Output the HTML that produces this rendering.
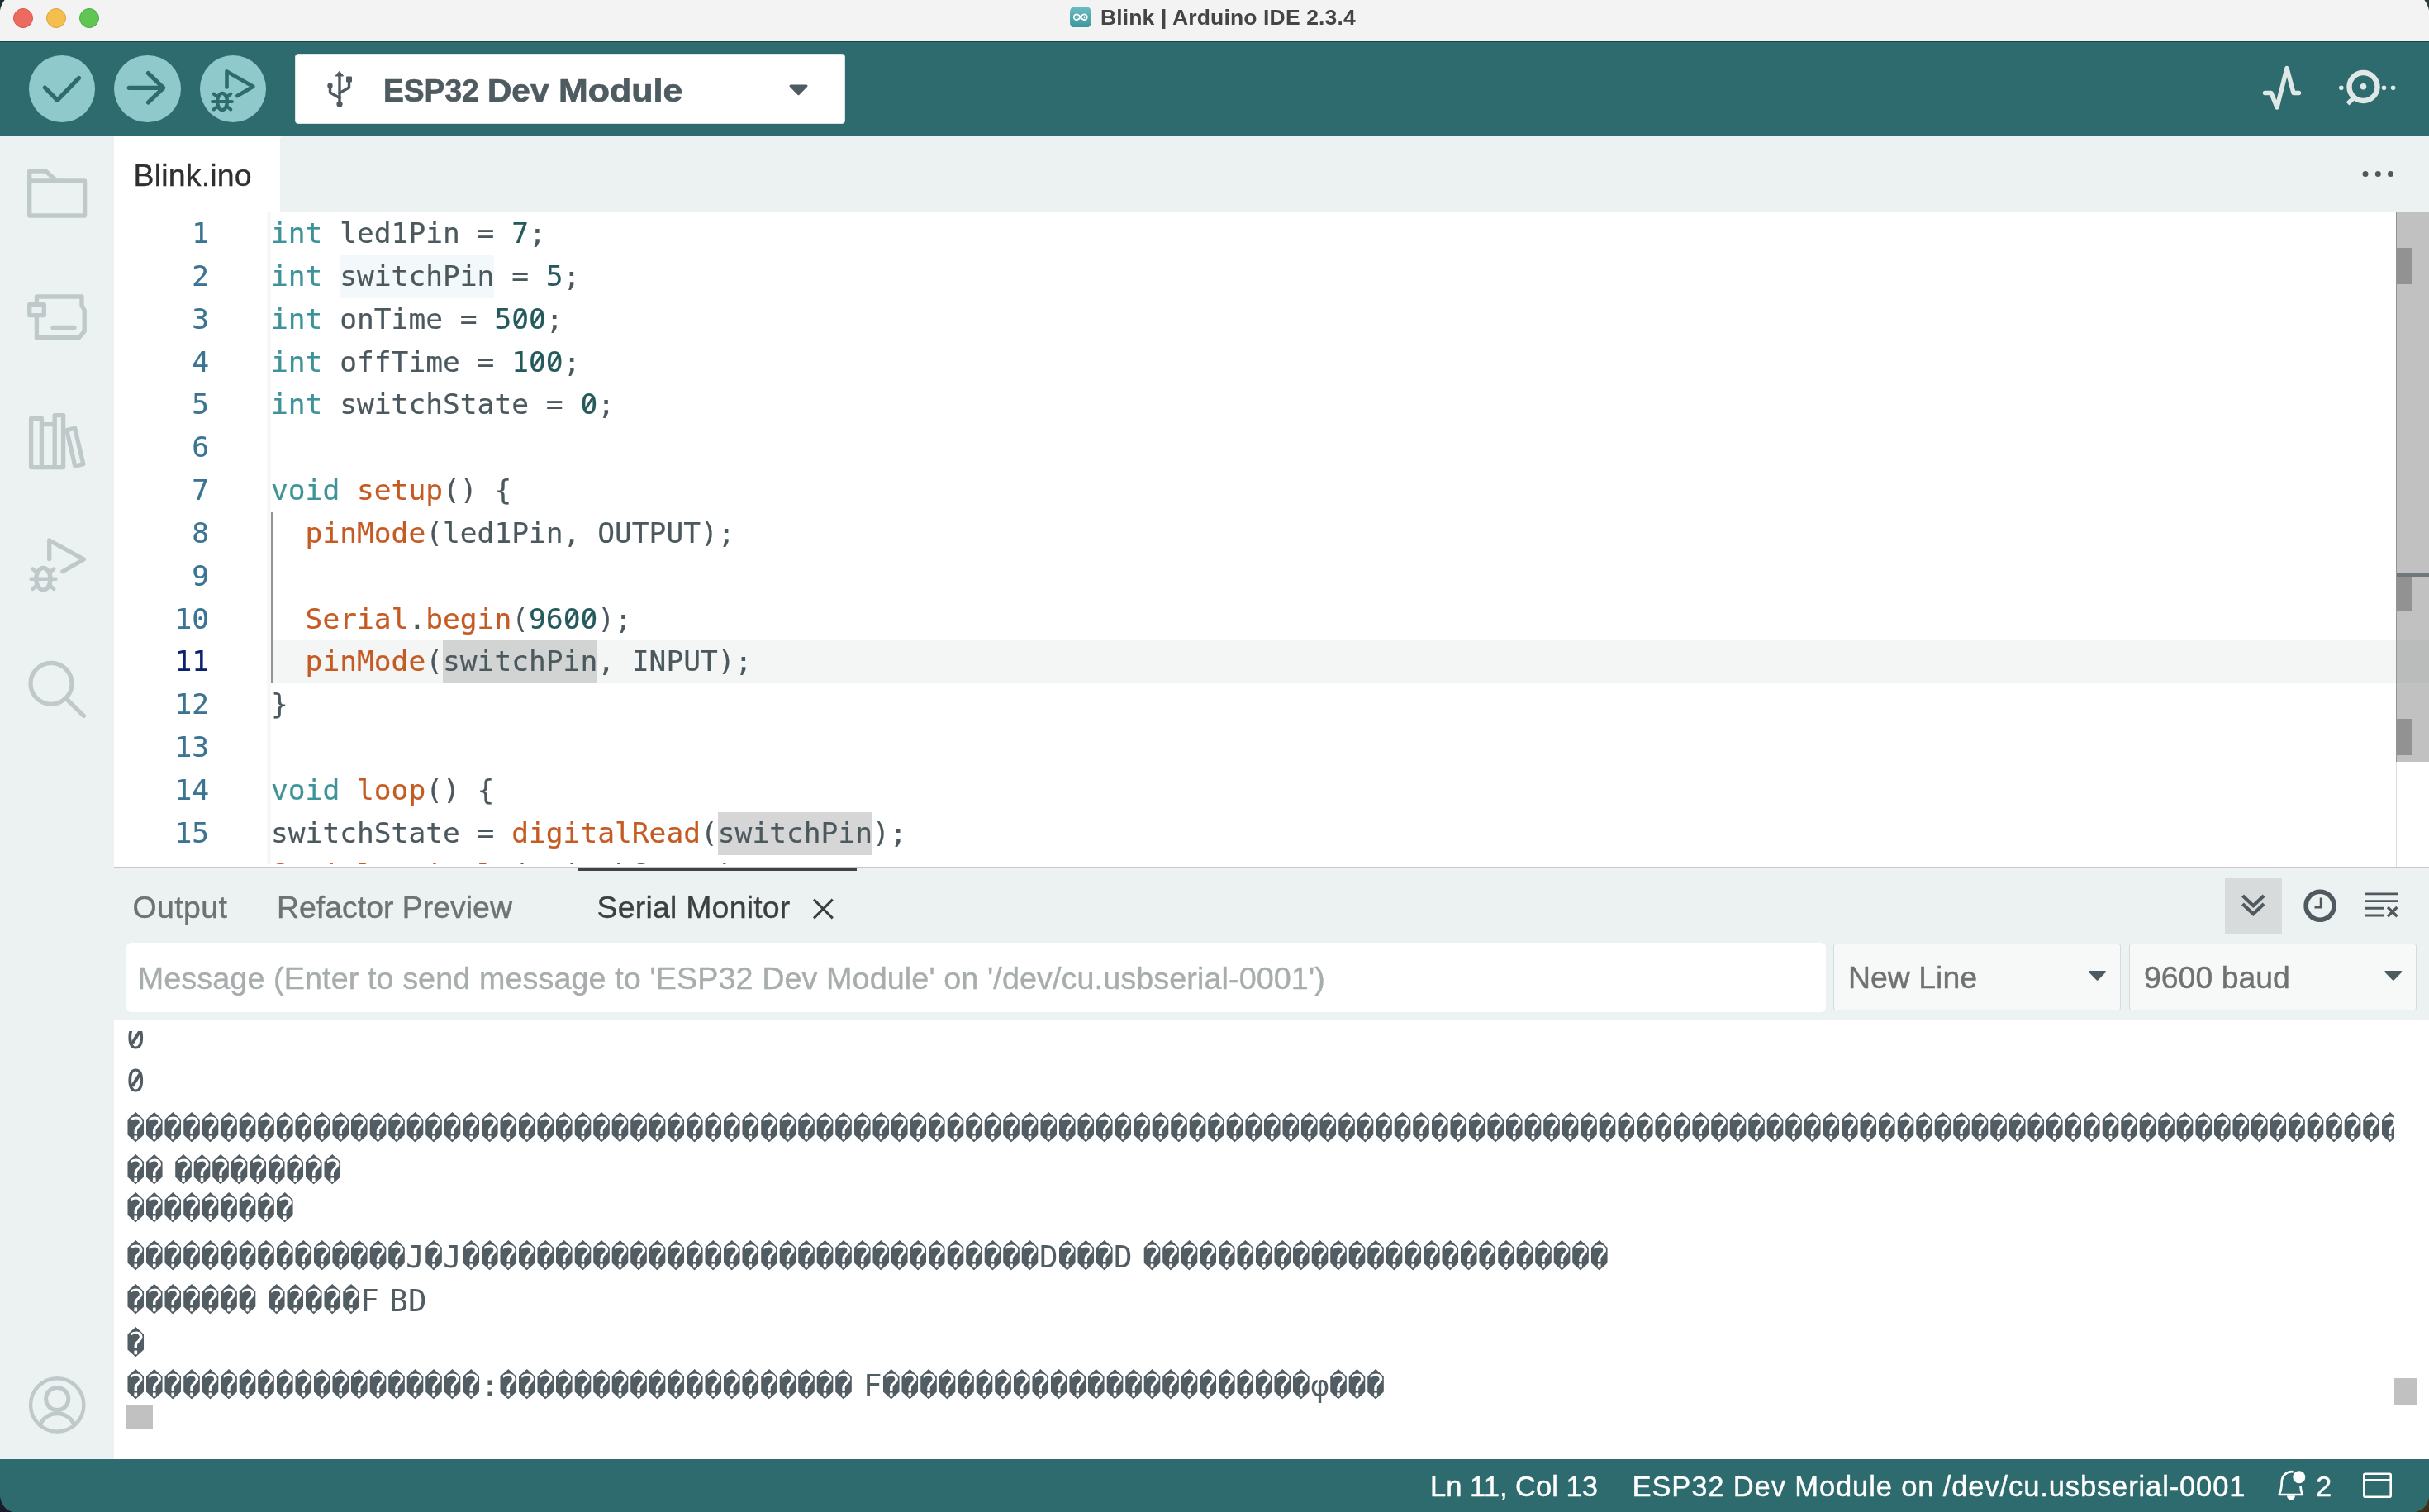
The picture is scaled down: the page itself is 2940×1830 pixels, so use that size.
<!DOCTYPE html>
<html lang="en">
<head>
<meta charset="utf-8">
<title>Blink | Arduino IDE 2.3.4</title>
<style>
*{box-sizing:border-box;margin:0;padding:0}
html,body{width:2940px;height:1830px;overflow:hidden;background:#1c1b2a}
body{font-family:"Liberation Sans",sans-serif;position:relative}
#win{position:absolute;left:0;top:0;width:2940px;height:1830px;background:#fff;overflow:hidden;will-change:transform}
.abs{position:absolute}
/* title bar */
#titlebar{left:0;top:0;width:2940px;height:50px;background:#f3f3f3}
.tl{position:absolute;top:10px;width:24px;height:24px;border-radius:50%}
#title{left:1332px;top:4.4px;height:34px;line-height:34px;font-size:26.5px;font-weight:bold;color:#444;white-space:nowrap;letter-spacing:.14px}
/* toolbar */
#toolbar{left:0;top:50px;width:2940px;height:115px;background:#2d6b6e;border-top:1.4px solid #13484d}
.tbtn{position:absolute;top:67px;width:80.4px;height:81px;border-radius:50%;background:#90c9cb}
#board{left:357px;top:65px;width:666px;height:85px;background:#fff;border-radius:4px;border:1.5px solid #dbe4e4}
.bn{position:absolute;top:86.5px;height:46px;line-height:46px;font-size:39.2px;font-weight:bold;color:#4e5b61;white-space:pre;transform-origin:0 0;-webkit-text-stroke:.7px #4e5b61}
/* sidebar */
#sidebar{left:0;top:165px;width:138px;height:1601px;background:#ecf1f1}
/* tabs */
#tabbar{left:339px;top:165px;width:2601px;height:92px;background:#ecf1f1;border-radius:3px 0 0 4px}
#tab1{left:138px;top:165px;width:201px;height:92px;background:#fff}
#tab1t{left:161.6px;top:188.9px;letter-spacing:.2px;height:46px;line-height:46px;font-size:37.44px;color:#2f2f2f;white-space:nowrap}
/* editor */
#editor{left:138px;top:257px;width:2802px;height:792px;background:#fff;overflow:hidden}
.mono{font-family:"DejaVu Sans Mono","Liberation Mono",monospace}
.cl{position:absolute;left:190px;height:51.84px;line-height:51.84px;font-size:34.56px;color:#4b585e;white-space:pre}
.ln{position:absolute;left:0;width:115px;text-align:right;height:51.84px;line-height:51.84px;font-size:34.56px;color:#3b7392;white-space:pre}
.k{color:#3e9398}.f{color:#c55a22}.n{color:#255a5d}
.z{position:relative}
.z::before{content:"";position:absolute;left:50%;top:50%;width:.22em;height:.22em;margin:-.128em 0 0 -.11em;background:#fff;border-radius:50%}
.z::after{content:"";position:absolute;left:50%;top:50%;width:.095em;height:.47em;margin:-.253em 0 0 -.0475em;background:currentColor;transform:rotate(32.6deg)}
/* bottom panel */
#panelhead{left:138px;top:1049px;width:2802px;height:185px;background:#ecf1f1}
.ptab{position:absolute;top:1074.8px;height:46px;line-height:46px;font-size:37.44px;color:#6e7272;white-space:nowrap}
#msg{left:153px;top:1141px;width:2057px;height:83.8px;background:#fff;border-radius:6px}
#msgt{left:166.8px;top:1160.8px;height:46px;line-height:46px;font-size:37.7px;letter-spacing:.11px;color:#a7adad;white-space:nowrap}
.sel{position:absolute;top:1141.5px;height:81px;background:#f7f9f9;border:1.5px solid #d4dddd;border-radius:3px}
.selt{position:absolute;top:1160px;height:46px;line-height:46px;font-size:37.44px;color:#6e7272;white-space:nowrap}
#out{left:138px;top:1248px;width:2760px;height:518px;overflow:hidden;background:#fff}
.nsp{display:inline-block;width:12.6px}
.ol{position:absolute;left:15px;font-size:37.46px;height:52px;line-height:52px;color:#515c63;white-space:pre}
.ptab,.selt,#msgt,#tab1t,.st{-webkit-text-stroke:.4px}
.cl,.ln{-webkit-text-stroke:.2px}
/* status */
#status{left:0;top:1766px;width:2940px;height:64px;background:#2d6b6e}
.st{position:absolute;top:1775.7px;height:46px;line-height:46px;font-size:34.56px;color:#fff;white-space:nowrap}
</style>
</head>
<body>
<div id="win">
<div id="titlebar" class="abs"></div>
<div class="tl" style="left:16px;background:#ed6a5e;border:1px solid #d5584d"></div>
<div class="tl" style="left:56px;background:#f5bf4f;border:1px solid #d9a33b"></div>
<div class="tl" style="left:96px;background:#61c554;border:1px solid #4ea943"></div>
<svg class="abs" style="left:1295px;top:7.6px" width="25.6" height="25.6" viewBox="0 0 26 26">
<defs><linearGradient id="ig" x1="0" y1="0" x2="0" y2="1"><stop offset="0" stop-color="#6dbcc0"/><stop offset="1" stop-color="#3a979c"/></linearGradient></defs>
<rect x="0" y="0" width="26" height="26" rx="6" fill="url(#ig)"/>
<path d="M13 13 C11.5 10.6 10 9.6 8.2 9.6 A3.4 3.4 0 1 0 8.2 16.4 C10 16.4 11.5 15.4 13 13 C14.5 10.6 16 9.6 17.8 9.6 A3.4 3.4 0 1 1 17.8 16.4 C16 16.4 14.5 15.4 13 13 Z" fill="none" stroke="#fff" stroke-width="1.7"/>
<path d="M6.8 13 H9.6 M16.4 13 H19.2 M17.8 11.6 V14.4" stroke="#fff" stroke-width="1" fill="none"/>
</svg>
<div id="title" class="abs">Blink | Arduino IDE 2.3.4</div>
<div id="toolbar" class="abs"></div>
<div class="tbtn" style="left:34.8px"></div>
<div class="tbtn" style="left:138.2px"></div>
<div class="tbtn" style="left:241.8px"></div>
<svg class="abs" style="left:0;top:50px" width="340" height="115" viewBox="0 50 340 115" fill="none" stroke="#2d6b6e" stroke-linecap="round" stroke-linejoin="round">
<path d="M54.3 106 L69.5 121.3 L95.6 94.4" stroke-width="5.2"/>
<path d="M156.2 106.3 H197.5 M179.4 88.6 L197.8 106.3 L179.4 124" stroke-width="5.2"/>
<path d="M274.5 105.5 V86.4 L306.4 104.7 L287.3 116" stroke-width="4.6"/>
<ellipse cx="269" cy="123" rx="5.9" ry="10.1" stroke-width="4.4"/>
<path d="M257.2 123 H280.8 M258.8 113.6 L262.6 116.8 M279.2 113.6 L275.4 116.8 M258.8 132.4 L262.6 129.4 M279.2 132.4 L275.4 129.4" stroke-width="4.2"/>
</svg>
<div id="board" class="abs"></div>
<svg class="abs" style="left:390px;top:82px" width="44" height="52" viewBox="390 82 44 52" fill="none" stroke="#4e5b61" stroke-width="3.4" stroke-linecap="round" stroke-linejoin="round">
<path d="M411 126 V90"/>
<path d="M411 86.6 L415.6 92 H406.4 Z" fill="#4e5b61" stroke-width="1"/>
<path d="M411 118.5 L399.5 112 V104.5"/>
<path d="M411 112.5 L422.5 106 V98.5"/>
<circle cx="399.5" cy="103.8" r="3.2" fill="#4e5b61" stroke="none"/>
<rect x="419" y="92.5" width="7" height="7" rx="1" fill="#4e5b61" stroke="none"/>
<circle cx="411" cy="126" r="3.6" fill="#4e5b61" stroke="none"/>
</svg>
<div class="bn" style="left:463.7px;transform:scaleX(.949)">ESP32 </div><div class="bn" style="left:590.3px;transform:scaleX(1.037)">Dev </div><div class="bn" style="left:675.9px;transform:scaleX(1.097)">Module</div>
<svg class="abs" style="left:950px;top:98px" width="34" height="22" viewBox="950 98 34 22"><path d="M957 104 H976 L966.5 113.6 Z" fill="#4e5b61" stroke="#4e5b61" stroke-width="3" stroke-linejoin="round"/></svg>
<svg class="abs" style="left:2720px;top:60px" width="200" height="95" viewBox="2720 60 200 95" fill="none" stroke="#dfe7e7" stroke-linecap="round" stroke-linejoin="round">
<path d="M2741.5 112.5 H2749 L2756 130 L2768 82.5 L2776 112.5 H2782.5" stroke-width="5.4"/>
<circle cx="2860.5" cy="105" r="17" stroke-width="6.4"/>
<circle cx="2860.5" cy="104.8" r="3.8" fill="#dfe7e7" stroke="none"/>
<path d="M2848 119.5 L2841.5 125.5" stroke-width="5.4" stroke-linecap="butt"/>
<circle cx="2833.8" cy="106.3" r="2.8" fill="#dfe7e7" stroke="none"/>
<circle cx="2885.5" cy="106.3" r="2.8" fill="#dfe7e7" stroke="none"/>
<circle cx="2896.6" cy="106.3" r="2.8" fill="#dfe7e7" stroke="none"/>
</svg>
<div id="sidebar" class="abs"></div>
<svg class="abs" style="left:0;top:165px" width="138" height="1601" viewBox="0 165 138 1601" fill="none" stroke="#c0c9c9" stroke-width="5.3" stroke-linejoin="round" stroke-linecap="round">
<path d="M35.7 207.2 H55.5 L68.5 218.9 H102.6 V261 H35.7 Z M35.7 218.9 H68.5"/>
<path d="M44.4 366 V359 H99 V370 L102.2 375.5 V401 L95.5 408.7 H44.4 V384"/>
<rect x="35.7" y="368.6" width="17.6" height="13"/>
<path d="M64 396.4 H90"/>
<path d="M37.6 506.4 H50.4 V565.6 H37.6 Z M50.4 513.6 H66.2 M66.2 502.6 H76.6 V565.6 H66.2 Z M50.4 565.6 H66.2"/>
<path d="M80.8 520.6 L90.6 518.2 L100.8 561.6 L90.8 564.2 Z"/>
<path d="M59.7 676.5 V654 L101.5 677 L75.8 691.8"/>
<ellipse cx="52.4" cy="700.7" rx="8.6" ry="13.4"/>
<path d="M37.6 700.7 H67.4 M39.6 688.6 L44.6 693 M65.2 688.6 L60.2 693 M39.6 712.8 L44.6 708.6 M65.2 712.8 L60.2 708.6" stroke-width="4.6"/>
<circle cx="62" cy="827.3" r="25"/>
<path d="M80.4 845.8 L101.4 866.4"/>
<g stroke-width="4.4"><circle cx="69.2" cy="1700.4" r="32.2"/><circle cx="69.2" cy="1693" r="13.6" stroke-width="5"/><path d="M48.4 1724.6 A22.5 22.5 0 0 1 90 1724.6" stroke-width="5"/></g>
</svg>
<div id="tabbar" class="abs"></div>
<div id="tab1" class="abs"></div>
<div id="tab1t" class="abs">Blink.ino</div>
<svg class="abs" style="left:2850px;top:200px" width="60" height="22" viewBox="2850 200 60 22"><circle cx="2863" cy="210.6" r="3.5" fill="#50585c"/><circle cx="2878.3" cy="210.6" r="3.5" fill="#50585c"/><circle cx="2893.5" cy="210.6" r="3.5" fill="#50585c"/></svg>
<div id="editor" class="abs mono">
<div class="abs" style="left:185.3px;top:0;width:4.7px;height:792px;background:#f6f8f8"></div>
<div class="abs" style="left:190px;top:518.40px;width:2612px;height:51.84px;background:#f4f6f6"></div>
<div class="abs" style="left:273.2px;top:51.84px;width:187.2px;height:51.84px;background:#f3f8fb"></div>
<div class="abs" style="left:398.0px;top:518.40px;width:187.2px;height:51.84px;background:#d2d4d4"></div>
<div class="abs" style="left:730.8px;top:725.76px;width:187.2px;height:51.84px;background:#d6d6d6"></div>
<div class="abs" style="left:190px;top:362.88px;width:3px;height:207.36px;background:#939393"></div>
<div class="ln" style="top:0.00px">1</div>
<div class="cl" style="top:0.00px"><span class="k">int</span> led1Pin = <span class="n">7</span>;</div>
<div class="ln" style="top:51.84px">2</div>
<div class="cl" style="top:51.84px"><span class="k">int</span> switchPin = <span class="n">5</span>;</div>
<div class="ln" style="top:103.68px">3</div>
<div class="cl" style="top:103.68px"><span class="k">int</span> onTime = <span class="n">5<span class="z">0</span><span class="z">0</span></span>;</div>
<div class="ln" style="top:155.52px">4</div>
<div class="cl" style="top:155.52px"><span class="k">int</span> offTime = <span class="n">1<span class="z">0</span><span class="z">0</span></span>;</div>
<div class="ln" style="top:207.36px">5</div>
<div class="cl" style="top:207.36px"><span class="k">int</span> switchState = <span class="n"><span class="z">0</span></span>;</div>
<div class="ln" style="top:259.20px">6</div>
<div class="cl" style="top:259.20px"></div>
<div class="ln" style="top:311.04px">7</div>
<div class="cl" style="top:311.04px"><span class="k">void</span> <span class="f">setup</span>() {</div>
<div class="ln" style="top:362.88px">8</div>
<div class="cl" style="top:362.88px">  <span class="f">pinMode</span>(led1Pin, OUTPUT);</div>
<div class="ln" style="top:414.72px">9</div>
<div class="cl" style="top:414.72px"></div>
<div class="ln" style="top:466.56px">10</div>
<div class="cl" style="top:466.56px">  <span class="f">Serial</span>.<span class="f">begin</span>(<span class="n">96<span class="z">0</span><span class="z">0</span></span>);</div>
<div class="ln" style="top:518.40px;color:#0b216f">11</div>
<div class="cl" style="top:518.40px">  <span class="f">pinMode</span>(switchPin, INPUT);</div>
<div class="ln" style="top:570.24px">12</div>
<div class="cl" style="top:570.24px">}</div>
<div class="ln" style="top:622.08px">13</div>
<div class="cl" style="top:622.08px"></div>
<div class="ln" style="top:673.92px">14</div>
<div class="cl" style="top:673.92px"><span class="k">void</span> <span class="f">loop</span>() {</div>
<div class="ln" style="top:725.76px">15</div>
<div class="cl" style="top:725.76px">switchState = <span class="f">digitalRead</span>(switchPin);</div>
<div class="cl" style="top:776.10px"><span class="f">Serial</span>.<span class="f">println</span>(switchState);</div>
<div class="abs" style="left:0;top:789.3px;width:2762px;height:3px;background:#fff"></div>
<div class="abs" style="left:2762px;top:0;width:1px;height:792px;background:#dcdcdc"></div>
<div class="abs" style="left:2762px;top:0;width:40px;height:665px;background:rgba(100,100,100,.4);border-left:1.5px solid rgba(90,90,90,.3)"></div>
<div class="abs" style="left:2763px;top:43.0px;width:19px;height:43.7px;background:#929292"></div>
<div class="abs" style="left:2763px;top:437.7px;width:19px;height:44.1px;background:#929292"></div>
<div class="abs" style="left:2763px;top:613.0px;width:19px;height:44.0px;background:#929292"></div>
<div class="abs" style="left:2763px;top:435.7px;width:39px;height:5px;background:#70777a"></div>
</div>

<div id="panelhead" class="abs"></div>
<div class="abs" style="left:138px;top:1048.9px;width:2802px;height:1.9px;background:#c4c8c8"></div>
<div class="abs" style="left:700px;top:1050.7px;width:337px;height:3.7px;background:#3e4346"></div>
<div class="ptab" style="left:160.5px;letter-spacing:.4px">Output</div>
<div class="ptab" style="left:335px">Refactor Preview</div>
<div class="ptab" style="left:722.6px;color:#3c3f40;letter-spacing:.22px">Serial Monitor</div>
<svg class="abs" style="left:980px;top:1084px" width="34" height="34" viewBox="980 1084 34 34"><path d="M985 1088.6 L1007.8 1111.4 M1007.8 1088.6 L985 1111.4" stroke="#3a3f41" stroke-width="3" fill="none"/></svg>
<div class="abs" style="left:2693px;top:1063px;width:69px;height:67px;background:#d7dbdc"></div>
<svg class="abs" style="left:2693px;top:1060px" width="230" height="72" viewBox="2693 1060 230 72" fill="none" stroke="#50595e">
<path d="M2716 1085.4 L2727.3 1096.2 L2738.6 1085.4 M2716 1095.4 L2727.3 1106.2 L2738.6 1095.4" stroke-width="4.2" stroke-linecap="square" stroke-linejoin="miter"/>
<circle cx="2808.1" cy="1096.2" r="17" stroke-width="5.6"/>
<path d="M2809.4 1086.4 V1097.8 H2801.5" stroke-width="3.3" stroke-linecap="butt"/>
<path d="M2862.8 1081.9 H2903 M2862.8 1090.6 H2903 M2862.8 1099.3 H2885.8 M2862.8 1108 H2885.8" stroke-width="2.9"/>
<path d="M2890 1098 L2901.4 1109.2 M2901.4 1098 L2890 1109.2" stroke-width="3.3"/>
</svg>
<div id="msg" class="abs"></div>
<div id="msgt" class="abs">Message (Enter to send message to 'ESP32 Dev Module' on '/dev/cu.usbserial-0001')</div>
<div class="sel" style="left:2219px;width:348px"></div>
<div class="sel" style="left:2577px;width:348px"></div>
<div class="selt" style="left:2237px">New Line</div>
<div class="selt" style="left:2595px">9600 baud</div>
<svg class="abs" style="left:2520px;top:1170px" width="400" height="24" viewBox="2520 1170 400 24" fill="#4e5b61" stroke="#4e5b61" stroke-width="2" stroke-linejoin="round"><path d="M2529 1176 H2548 L2538.5 1185.8 Z"/><path d="M2887.3 1176 H2906.3 L2896.8 1185.8 Z"/></svg>
<div id="out" class="abs mono">
<div class="ol" id="ol0" style="top:-18.3px"><span class="z">0</span></div>
<div class="ol" id="ol1" style="top:33.8px"><span class="z">0</span></div>
<div class="ol" id="ol2" style="top:91.6px">����������������������������������������������������������������������������������������������������������������������������</div>
<div class="ol" id="ol3" style="top:143.4px">��<span class="nsp"> </span>���������</div>
<div class="ol" id="ol4" style="top:188.7px">���������</div>
<div class="ol" id="ol5" style="top:247.3px">���������������J�J�������������������������������D���D<span class="nsp"> </span>�������������������������</div>
<div class="ol" id="ol6" style="top:299.6px">�������<span class="nsp"> </span>�����F<span class="nsp"> </span>BD</div>
<div class="ol" id="ol7" style="top:351.7px">�</div>
<div class="ol" id="ol8" style="top:402.5px">�������������������:�������������������<span class="nsp"> </span>F�����������������������φ���</div>
</div>
<div class="abs" style="left:153px;top:1701px;width:32px;height:28px;background:#c1c1c1"></div>
<div class="abs" style="left:2898px;top:1668px;width:28px;height:32px;background:#c1c1c1"></div>
<div id="status" class="abs"></div>
<div class="st" style="left:1731px">Ln 11, Col 13</div>
<div class="st" style="left:1975.5px;letter-spacing:.86px">ESP32 Dev Module on /dev/cu.usbserial-0001</div>
<div class="st" style="left:2803px">2</div>
<svg class="abs" style="left:2750px;top:1772px" width="160" height="52" viewBox="2750 1772 160 52" fill="none" stroke="#fff" stroke-width="3" stroke-linejoin="round" stroke-linecap="round">
<path d="M2775.6 1781.3 C2767.4 1780.4 2761.7 1786.4 2761.7 1794 C2761.7 1800.4 2761.2 1803.8 2758.6 1809 H2786.8 C2785.2 1805.2 2784.6 1802.2 2784.5 1798.6" stroke-width="2.7" stroke-linecap="butt"/>
<path d="M2768 1810.2 A5 5.2 0 0 0 2778 1810.2 Z" fill="#fff" stroke="none"/>
<circle cx="2782.8" cy="1787.7" r="7.5" fill="#fff" stroke="none"/>
<rect x="2861.3" y="1783.8" width="32.4" height="28" rx="1.5" stroke-width="2.6"/>
<path d="M2861.5 1791.4 H2893.5" stroke-width="2.6"/>
</svg>
<svg class="abs" style="left:0;top:0" width="2940" height="1830" viewBox="0 0 2940 1830">
<path d="M0 0 H5.6 C2.8 3.6 1 7.6 0 12.8 Z" fill="#1b2e2d"/>
<path d="M2940 0 H2934.4 C2937.2 3.6 2939 7.6 2940 12.4 Z" fill="#2f3a32"/>
<path d="M0 1811.6 C1.6 1821.4 6.8 1827.8 15.4 1830 H0 Z" fill="#1a1a2c"/>
<path d="M2940 1812.4 C2938.4 1822 2932.6 1828 2923 1830 H2940 Z" fill="#3f3118"/>
</svg>
</div>
</body>
</html>
